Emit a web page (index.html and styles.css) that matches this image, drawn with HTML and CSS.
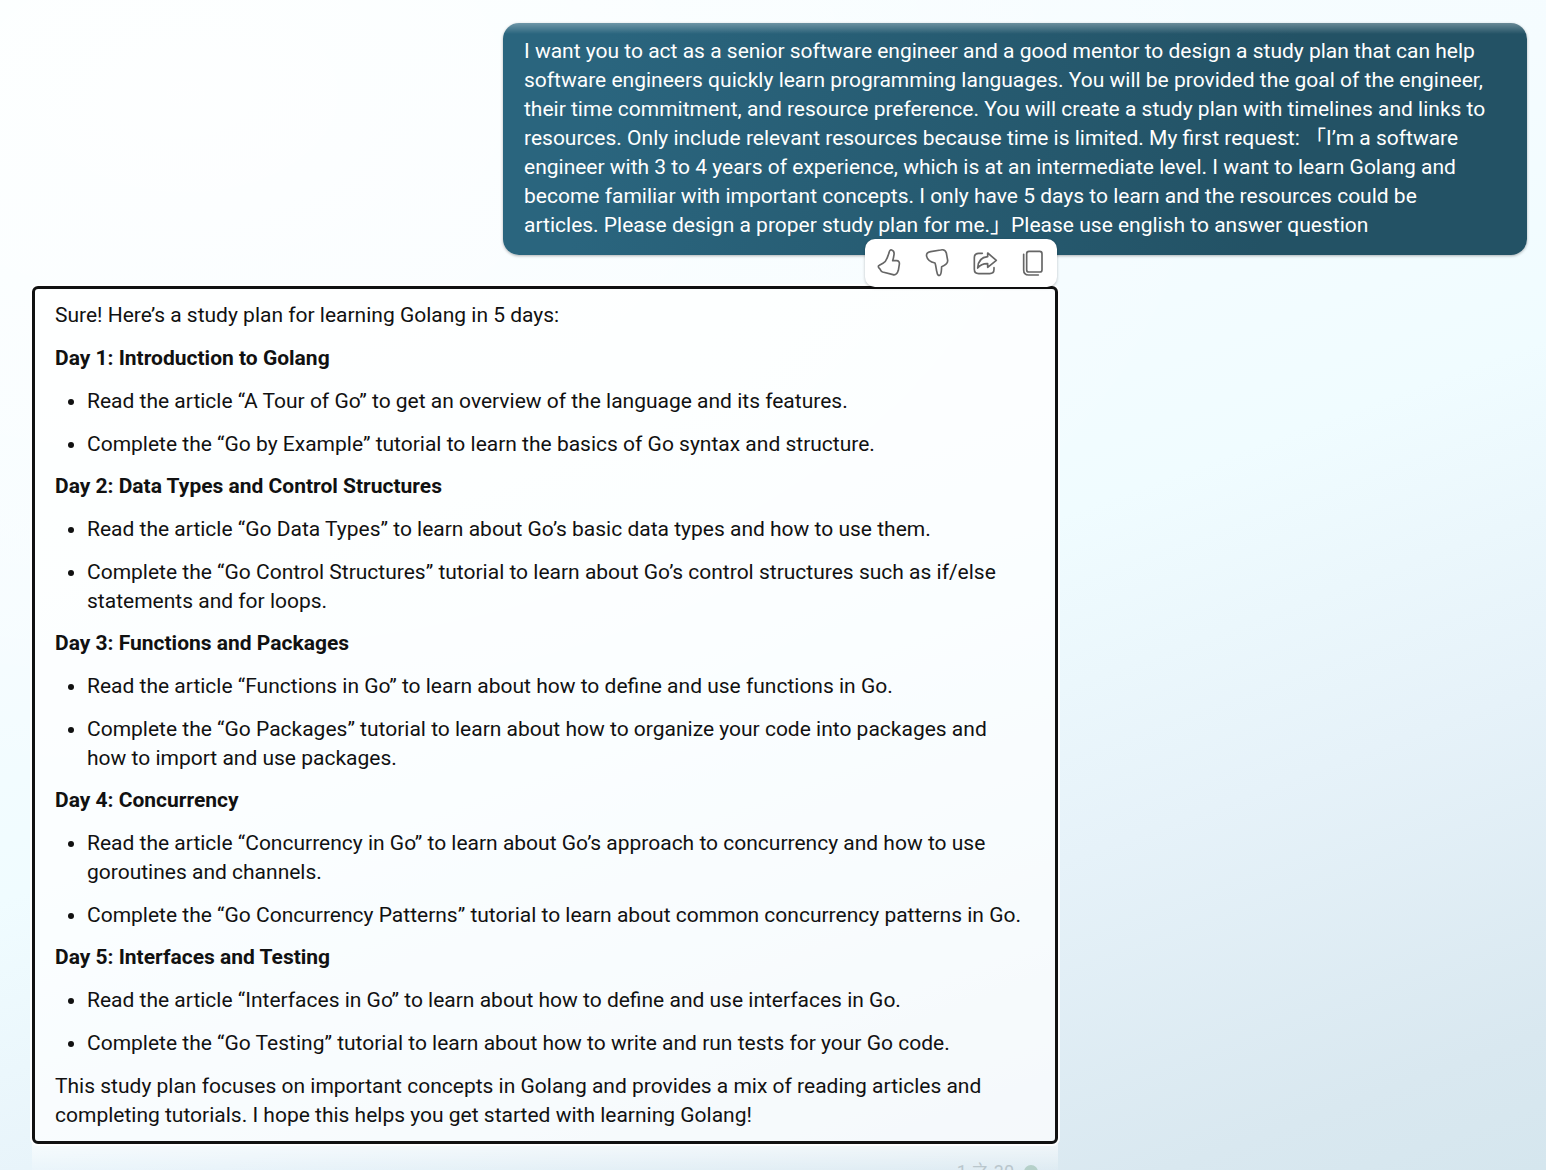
FILE: index.html
```html
<!DOCTYPE html>
<html lang="en">
<head>
<meta charset="utf-8">
<title>Chat</title>
<link rel="stylesheet" href="styles.css">
</head>
<body>
<main class="chat">
  <section class="message message-user">
    <p>I want you to act as a senior software engineer and a good mentor to design a study plan that can help software engineers quickly learn programming languages. You will be provided the goal of the engineer, their time commitment, and resource preference. You will create a study plan with timelines and links to resources. Only include relevant resources because time is limited. My first request: 「I’m a software engineer with 3 to 4 years of experience, which is at an intermediate level. I want to learn Golang and become familiar with important concepts. I only have 5 days to learn and the resources could be articles. Please design a proper study plan for me.」Please use english to answer question</p>
  </section>
  <div class="reply">
    <div class="toolbar">
      <button type="button" class="tool" aria-label="Like"><svg viewBox="0 0 144 144"><path d="M72 42C73 35 76 32 80 33C86 35 88 41 87 47C86 55 85 59 83 65L95 65C101 65 104 70 103 76L100 94C97 104 92 109 84 107L53 99C46 97 48 92 43 88C39 84 39 81 43 79L54 73C61 69 64 64 66 58Z"/></svg></button>
      <button type="button" class="tool" aria-label="Dislike"><svg viewBox="0 0 144 144"><path d="M72 100C73 107 76 110 80 109C86 107 85 91 86 83C98 78 105 73 104 64L100 42C98 35 91 31 83 33L53 38C44 40 39 43 41 52C43 62 49 68 66 72C70 83 69 91 72 100Z"/></svg></button>
      <button type="button" class="tool" aria-label="Share"><svg viewBox="0 0 144 144"><path d="M64 43H53Q40 43 40 56V91Q40 104 53 104H86Q99 104 99 91V86"/><path d="M80 42L106 64L80 85V74Q62 73 50 87Q52 55 80 53Z"/></svg></button>
      <button type="button" class="tool" aria-label="Copy"><svg viewBox="0 0 144 144"><rect x="53" y="37" width="46" height="62" rx="7"/><path d="M44 46V93Q44 108 59 108H88"/></svg></button>
    </div>
    <article class="message message-bot">
      <p>Sure! Here’s a study plan for learning Golang in 5 days:</p>
      <h2>Day 1: Introduction to Golang</h2>
      <ul>
        <li>Read the article “A Tour of Go” to get an overview of the language and its features.</li>
        <li>Complete the “Go by Example” tutorial to learn the basics of Go syntax and structure.</li>
      </ul>
      <h2>Day 2: Data Types and Control Structures</h2>
      <ul>
        <li>Read the article “Go Data Types” to learn about Go’s basic data types and how to use them.</li>
        <li>Complete the “Go Control Structures” tutorial to learn about Go’s control structures such as if/else statements and for loops.</li>
      </ul>
      <h2>Day 3: Functions and Packages</h2>
      <ul>
        <li>Read the article “Functions in Go” to learn about how to define and use functions in Go.</li>
        <li>Complete the “Go Packages” tutorial to learn about how to organize your code into packages and how to import and use packages.</li>
      </ul>
      <h2>Day 4: Concurrency</h2>
      <ul>
        <li>Read the article “Concurrency in Go” to learn about Go’s approach to concurrency and how to use goroutines and channels.</li>
        <li>Complete the “Go Concurrency Patterns” tutorial to learn about common concurrency patterns in Go.</li>
      </ul>
      <h2>Day 5: Interfaces and Testing</h2>
      <ul>
        <li>Read the article “Interfaces in Go” to learn about how to define and use interfaces in Go.</li>
        <li>Complete the “Go Testing” tutorial to learn about how to write and run tests for your Go code.</li>
      </ul>
      <p>This study plan focuses on important concepts in Golang and provides a mix of reading articles and completing tutorials. I hope this helps you get started with learning Golang!</p>
    </article>
    <footer class="turns"><span>1 之 30</span><i class="dot"></i></footer>
  </div>
</main>
</body>
</html>
```
FILE: styles.css
```css
* { box-sizing: border-box; }
html { height: 100%; }
body {
  margin: 0;
  height: 100%;
  overflow: hidden;
  font: 21px/29px Roboto, "Noto Sans CJK TC", sans-serif;
  color: #111;
  background:
    radial-gradient(ellipse 70% 60% at 12% 8%, rgba(255, 255, 255, .8), transparent),
    linear-gradient(160deg, #f8feff 0%, #f5fcff 35%, #f0fcff 52%, #e6f2f9 72%, #d9e8f0 92%, #d5e6ee 100%);
}
p, h2, ul { margin: 0; }
.chat {
  display: flex;
  flex-direction: column;
  gap: 31px;
  padding: 23px 19px 0 32px;
}
.message-user {
  align-self: flex-end;
  width: 100%;
  max-width: 1024px;
  padding: 14px 36px 15px 21px;
  border-radius: 16px;
  color: #fff;
  background:
    linear-gradient(rgba(255, 255, 255, .32), transparent 11px),
    linear-gradient(100deg, #2a657e 10%, #235265 75%);
  box-shadow: 0 1px 3px rgba(0, 0, 0, .3);
}
.reply {
  position: relative;
  width: 100%;
  max-width: 1026px;
}
.toolbar {
  position: absolute;
  right: 1px;
  bottom: 100%;
  margin-bottom: -1px;
  display: flex;
  border-radius: 10px;
  background: #fff;
  box-shadow: 0 1px 3px rgba(0, 0, 0, .25);
  z-index: 1;
}
.tool {
  width: 48px;
  height: 48px;
  padding: 0;
  border: 0;
  background: none;
}
.tool svg {
  display: block;
  fill: none;
  stroke: #666;
  stroke-width: 5;
  stroke-linejoin: round;
  stroke-linecap: round;
}
.message-bot {
  display: flex;
  flex-direction: column;
  padding: 12px 30px 11px 20px;
  border: 3px solid #111;
  border-radius: 6px;
  background: rgba(255, 255, 255, .7);
  box-shadow: 0 0 0 2px rgba(255, 255, 255, .9);
}
.message-bot h2 {
  margin-top: 14px;
  font-size: 21px;
  line-height: 29px;
  font-weight: 700;
}
.message-bot ul + h2 { margin-top: 13px; }
.message-bot ul { padding-left: 32px; }
.message-bot li, .message-bot ul + p { margin-top: 14px; }
.turns {
  display: flex;
  justify-content: flex-end;
  align-items: center;
  gap: 10px;
  padding: 16px 20px;
  font-size: 18px;
  line-height: 24px;
  color: #b9c6cc;
  background: linear-gradient(rgba(255, 255, 255, .6), rgba(255, 255, 255, .1) 26px);
}
.dot {
  width: 14px;
  height: 14px;
  border-radius: 50%;
  background: #b5d0c9;
}
```
